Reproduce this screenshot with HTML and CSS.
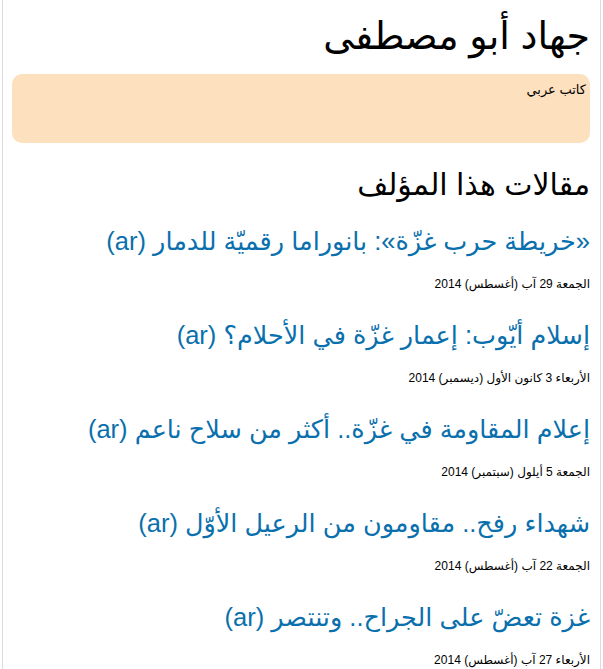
FILE: index.html
```html
<!DOCTYPE html>
<html lang="ar" dir="rtl">
<head>
    <meta charset="UTF-8">
    <title>جهاد أبو مصطفى</title>
    <link rel="stylesheet" href="styles.css">
</head>
<body>
    <div class="page">
        <h1 class="author-name">جهاد أبو مصطفى</h1>
        <div class="author-bio">كاتب عربي</div>

        <h2 class="section-title">مقالات هذا المؤلف</h2>
        <ul class="articles">
            <li class="article">
                <a href="#" class="article-link">«خريطة حرب غزّة»: بانوراما رقميّة للدمار (ar)</a>
                <div class="article-date">الجمعة 29 آب (أغسطس) 2014</div>
            </li>
            <li class="article">
                <a href="#" class="article-link">إسلام أيّوب: إعمار غزّة في الأحلام؟ (ar)</a>
                <div class="article-date">الأربعاء 3 كانون الأول (ديسمبر) 2014</div>
            </li>
            <li class="article">
                <a href="#" class="article-link">إعلام المقاومة في غزّة.. أكثر من سلاح ناعم (ar)</a>
                <div class="article-date">الجمعة 5 أيلول (سبتمبر) 2014</div>
            </li>
            <li class="article">
                <a href="#" class="article-link">شهداء رفح.. مقاومون من الرعيل الأوّل (ar)</a>
                <div class="article-date">الجمعة 22 آب (أغسطس) 2014</div>
            </li>
            <li class="article">
                <a href="#" class="article-link">غزة تعضّ على الجراح.. وتنتصر (ar)</a>
                <div class="article-date">الأربعاء 27 آب (أغسطس) 2014</div>
            </li>
        </ul>
    </div>
</body>
</html>
```

FILE: styles.css
```css
* {
    margin: 0;
    padding: 0;
    box-sizing: border-box;
}

body {
    font-family: "Liberation Sans", "DejaVu Sans", sans-serif;
    background: #ffffff;
    color: #000000;
}

.page {
    margin: 0 2px;
    min-height: 100vh;
    border-left: 1px solid #dcdcdc;
    border-right: 1px solid #dcdcdc;
    padding: 0 10px 0 9px;
}

.author-name {
    font-size: 38px;
    font-weight: normal;
    line-height: 48px;
    padding-top: 12px;
}

.author-bio {
    margin-top: 14px;
    height: 69px;
    padding: 8px 4px;
    background: #fde0be;
    border-radius: 10px;
    font-size: 13px;
}

.section-title {
    font-size: 30px;
    font-weight: normal;
    line-height: 36px;
    margin-top: 24px;
}

.articles {
    list-style: none;
    padding-top: 7px;
}

.article {
    padding-top: 14px;
    height: 94px;
}

.article-link {
    color: #0a70ad;
    text-decoration: none;
    font-size: 25.5px;
    line-height: 34px;
}

.article-date {
    font-size: 12px;
    margin-top: 19px;
}
```
